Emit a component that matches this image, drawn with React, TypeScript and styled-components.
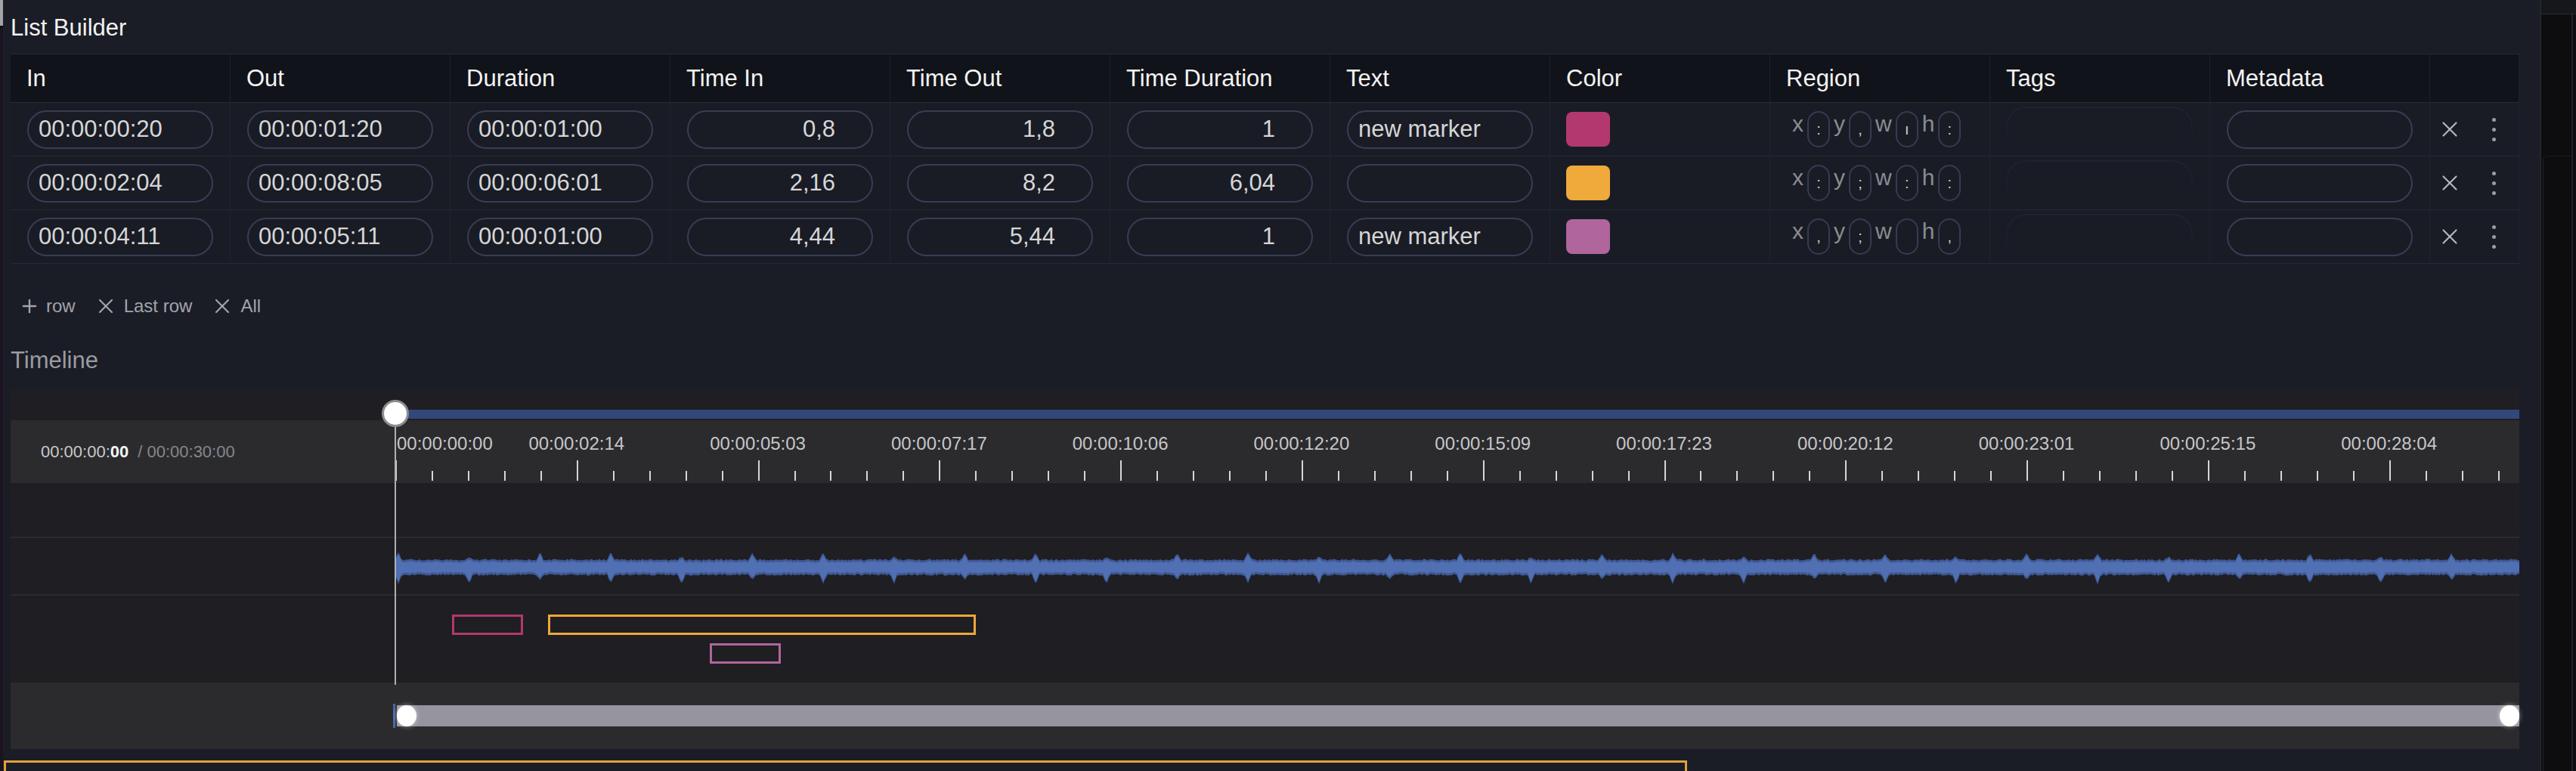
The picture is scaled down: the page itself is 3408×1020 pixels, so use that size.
import React from "react";
import styled, { createGlobalStyle } from "styled-components";
import { Plus, X } from "lucide-react";

const GlobalStyle = createGlobalStyle`
  html, body {
    margin: 0;
    padding: 0;
    background: #1a1d26;
    overflow: hidden;
  }
  body {
    font-family: "Liberation Sans", Arial, sans-serif;
  }
  * { box-sizing: border-box; }
`;

// timeline scale
const LANE_W = 2810;
const DURATION = 30;
const PPS = LANE_W / DURATION;
const FPS = 25;
const MAJOR = 2.56 * PPS;

const pad = (n: number) => String(n).padStart(2, "0");
const tc = (frames: number) =>
  `00:00:${pad(Math.floor(frames / FPS))}:${pad(frames % FPS)}`;

interface MarkerRow {
  tcIn: string;
  tcOut: string;
  tcDur: string;
  timeIn: string;
  timeOut: string;
  timeDur: string;
  text: string;
  color: string;
  region: string[];
}

const rows: MarkerRow[] = [
  { tcIn: "00:00:00:20", tcOut: "00:00:01:20", tcDur: "00:00:01:00", timeIn: "0,8", timeOut: "1,8", timeDur: "1", text: "new marker", color: "#b3386f", region: [":", ",", "ı", ":"] },
  { tcIn: "00:00:02:04", tcOut: "00:00:08:05", tcDur: "00:00:06:01", timeIn: "2,16", timeOut: "8,2", timeDur: "6,04", text: "", color: "#f0a93b", region: [":", ";", ":", ":"] },
  { tcIn: "00:00:04:11", tcOut: "00:00:05:11", tcDur: "00:00:01:00", timeIn: "4,44", timeOut: "5,44", timeDur: "1", text: "new marker", color: "#b0659d", region: [",", ";", "", ","] },
];

const markers = [
  { start: 0.8, dur: 1, color: "#b3386f", lane: 0 },
  { start: 2.16, dur: 6.04, color: "#eda73a", lane: 0 },
  { start: 4.44, dur: 1, color: "#b0659d", lane: 1 },
];

const headers = ["In", "Out", "Duration", "Time In", "Time Out", "Time Duration", "Text", "Color", "Region", "Tags", "Metadata", ""];

const Page = styled.div`
  display: flex;
  width: 3408px;
  height: 1020px;
  overflow: hidden;
  background: #1a1d26;
`;

const LeftEdge = styled.div`
  width: 4px;
  flex: none;
  background: linear-gradient(#a3a3a8 0 34px, #101014 34px 38px, #1b1420 38px);
`;

const Main = styled.main`
  flex: 1;
  min-width: 0;
  padding: 19px 27px 0 10px;
  display: flex;
  flex-direction: column;
  & > * { flex-shrink: 0; }
`;

const SectionTitle = styled.h2<{ $muted?: boolean }>`
  margin: 0;
  font-size: 31px;
  line-height: 36px;
  font-weight: 400;
  color: ${(p) => (p.$muted ? "#9b9ba0" : "#f2f2f2")};
`;

const Table = styled.div`
  margin-top: 16px;
  display: grid;
  grid-template-columns: repeat(11, 291px) 118px;
  border-top: 1px solid #262a35;
  background: #191c25;
`;

const HeadCell = styled.div`
  height: 64px;
  display: flex;
  align-items: center;
  padding-left: 21px;
  background: #11131a;
  border-right: 1px solid #1f222b;
  border-bottom: 1px solid #262a35;
  color: #f4f4f4;
  font-size: 31px;
`;

const Cell = styled.div<{ $pl?: number }>`
  height: 71px;
  display: flex;
  align-items: center;
  padding: 0 22px 0 ${(p) => p.$pl ?? 22}px;
  border-right: 1px solid #20232d;
  border-bottom: 1px solid #262a35;
`;

const Field = styled.input<{ $num?: boolean }>`
  width: 100%;
  height: 51px;
  border: 2px solid #383d55;
  border-radius: 26px;
  background: transparent;
  color: #d6d6d6;
  font-family: "Liberation Sans", Arial, sans-serif;
  font-size: 31px;
  padding: ${(p) => (p.$num ? "0 48px 0 13px" : "0 13px")};
  text-align: ${(p) => (p.$num ? "right" : "left")};
  outline: none;
`;

const Swatch = styled.div<{ $color: string }>`
  width: 58px;
  height: 46px;
  border-radius: 8px;
  background: ${(p) => p.$color};
`;

const RegionGroup = styled.div`
  display: flex;
  align-items: flex-start;
  gap: 5px;
  padding-left: 7px;
  height: 48px;
`;

const RegionLabel = styled.span`
  font-size: 30px;
  line-height: 34px;
  color: #8b8b92;
`;

const RegionPill = styled.span`
  width: 30px;
  height: 48px;
  border: 2px solid #363b52;
  border-radius: 15px;
  display: flex;
  align-items: center;
  justify-content: center;
  color: #cfcfcf;
  font-size: 20px;
  line-height: 1;
`;

const TagBox = styled.div`
  align-self: flex-start;
  margin-top: 5px;
  width: 100%;
  height: 50px;
  border: 2px solid #1f2230;
  border-bottom: none;
  border-radius: 26px 26px 0 0;
  mask-image: linear-gradient(#000 30%, transparent);
`;

const RowClose = styled.button`
  display: flex;
  padding: 0;
  border: none;
  background: none;
  color: #b6b6bb;
`;

const Kebab = styled.span`
  margin-left: 39px;
  display: flex;
  flex-direction: column;
  gap: 8px;
  & > i {
    width: 5px;
    height: 5px;
    border-radius: 50%;
    background: #9c9ca2;
  }
`;

const ButtonBar = styled.div`
  margin-top: 40px;
  padding-left: 11px;
  display: flex;
  gap: 24px;
  height: 32px;
`;

const TextButton = styled.button`
  display: flex;
  align-items: center;
  gap: 8px;
  padding: 0;
  border: none;
  background: none;
  color: #a3a3ab;
  font-family: "Liberation Sans", Arial, sans-serif;
  font-size: 24px;
  line-height: 28px;
`;

const TimelineTitle = styled(SectionTitle)`
  margin-top: 38px;
`;

const Panel = styled.div`
  margin-top: 19px;
  position: relative;
  display: flex;
  flex-direction: column;
`;

const TRow = styled.div<{ $h: number; $light?: boolean; $sep?: boolean }>`
  display: flex;
  height: ${(p) => p.$h}px;
  background: ${(p) => (p.$light ? "#2b2b2e" : "#1f1e22")};
  border-bottom: ${(p) => (p.$sep ? "2px solid #2c2c30" : "none")};
`;

const LabelCell = styled.div`
  width: 509px;
  flex: none;
  display: flex;
  align-items: center;
  padding-left: 40px;
  font-size: 22px;
`;

const Lane = styled.div`
  flex: 1;
  position: relative;
`;

const ScrubLane = styled(Lane)`
  display: flex;
  align-items: flex-end;
  padding-bottom: 2px;
`;

const ScrubBar = styled.div`
  width: 100%;
  height: 12px;
  background: #33487a;
`;

const Current = styled.span`
  color: #c9c9c9;
  & > b {
    color: #f4f4f4;
    font-weight: 700;
  }
`;

const Total = styled.span`
  margin-left: 12px;
  color: #86868b;
`;

const TickLabel = styled.span<{ $first?: boolean }>`
  position: absolute;
  top: 17px;
  font-size: 24px;
  line-height: 28px;
  color: #c6c6c8;
  white-space: nowrap;
  transform: ${(p) => (p.$first ? "none" : "translateX(-50%)")};
`;

const Block = styled.div<{ $color: string }>`
  position: absolute;
  height: 27px;
  border: 3px solid ${(p) => p.$color};
`;

const ScrollLane = styled(Lane)`
  display: flex;
  align-items: center;
`;

const ScrollTrack = styled.div`
  position: relative;
  flex: 1;
  margin-left: 2px;
  height: 28px;
  background: #96949f;
`;

const ScrollEdge = styled.span`
  position: absolute;
  left: -5px;
  top: -2px;
  width: 3px;
  height: 32px;
  background: #4a66a8;
`;

const ScrollKnob = styled.span<{ $side: "left" | "right" }>`
  position: absolute;
  top: 0;
  ${(p) => p.$side}: 0;
  width: 26px;
  height: 28px;
  border-radius: 50%;
  background: #ffffff;
  box-shadow: 0 0 6px rgba(255, 255, 255, 0.55);
`;

const PlayheadLine = styled.div`
  position: absolute;
  left: 508px;
  top: 33px;
  width: 2px;
  height: 359px;
  background: #b0b0b3;
`;

const PlayheadKnob = styled.div`
  position: absolute;
  left: 491px;
  top: 15px;
  width: 36px;
  height: 36px;
  border-radius: 50%;
  background: #ffffff;
  border: 3px solid #8c8c90;
`;

const OrangeBox = styled.div`
  margin-top: 15px;
  margin-left: -9px;
  width: 2227px;
  height: 200px;
  border: 3px solid #e2a13a;
`;

const SidePanel = styled.aside`
  width: 48px;
  flex: none;
  display: flex;
  flex-direction: column;
  background: linear-gradient(90deg, #0d0d0f 0 40px, #2a1a30 40px 42px, #0d0d0f 42px);
  border-left: 2px solid #25262b;
`;

const SideTop = styled.div`
  height: 19px;
  background: #16171b;
  border-bottom: 1px solid #2a2b31;
`;

const SideInner = styled.div`
  margin: 187px 6px 0 2px;
  flex: 1;
  border-left: 1px solid #202126;
  border-top: 1px solid #1c1d22;
  border-top-left-radius: 6px;
`;

function seeded(seed: number) {
  let s = seed;
  return () => {
    s = (s * 9301 + 49297) % 233280;
    return s / 233280;
  };
}

function wavePath(inset: number) {
  const r = seeded(11);
  const spikes: number[] = [];
  for (let x = 4; x < LANE_W; x += PPS) spikes.push(x);
  const top: string[] = [];
  const bot: string[] = [];
  for (let x = 0; x <= LANE_W; x += 2) {
    let t = 28.5 + (r() - 0.5) * 2.4 + inset;
    let b = 48.5 + (r() - 0.5) * 2.4 - inset;
    spikes.forEach((sx, k) => {
      const d = Math.abs(x - sx);
      if (d < 5) {
        const a = 1 - d / 5;
        t -= 9 * a * (k % 3 === 1 ? 0.45 : 1);
        b += 12 * a * (k % 3 === 2 ? 0.55 : 1);
      }
    });
    top.push(`${x},${t.toFixed(1)}`);
    bot.push(`${x},${b.toFixed(1)}`);
  }
  return `M${top.join(" L")} L${bot.reverse().join(" L")} Z`;
}

const outerWave = wavePath(0);
const innerWave = wavePath(3);

function Ruler() {
  const ticks: number[] = [];
  for (let i = 0; i * (MAJOR / 5) < LANE_W; i++) ticks.push(i);
  const majors = ticks.filter((i) => i % 5 === 0);
  return (
    <>
      {majors.map((i) => {
        const k = i / 5;
        return (
          <TickLabel key={k} $first={k === 0} style={{ left: k === 0 ? 2 : k * MAJOR }}>
            {tc(k * 64)}
          </TickLabel>
        );
      })}
      <svg width={LANE_W} height={83} style={{ display: "block" }}>
        {ticks.map((i) => {
          const x = Math.round(i * (MAJOR / 5)) + 1;
          return (
            <line
              key={i}
              x1={x}
              x2={x}
              y1={i % 5 === 0 ? 53 : 67}
              y2={80}
              stroke="#d6d6d8"
              strokeWidth={2}
            />
          );
        })}
      </svg>
    </>
  );
}

export default function App() {
  return (
    <Page>
      <GlobalStyle />
      <LeftEdge />
      <Main>
        <SectionTitle>List Builder</SectionTitle>

        <Table>
          {headers.map((h, i) => (
            <HeadCell key={i}>{h}</HeadCell>
          ))}
          {rows.map((row, r) => (
            <React.Fragment key={r}>
              <Cell><Field readOnly value={row.tcIn} /></Cell>
              <Cell><Field readOnly value={row.tcOut} /></Cell>
              <Cell><Field readOnly value={row.tcDur} /></Cell>
              <Cell><Field $num readOnly value={row.timeIn} /></Cell>
              <Cell><Field $num readOnly value={row.timeOut} /></Cell>
              <Cell><Field $num readOnly value={row.timeDur} /></Cell>
              <Cell><Field readOnly value={row.text} /></Cell>
              <Cell $pl={21}><Swatch $color={row.color} /></Cell>
              <Cell>
                <RegionGroup>
                  {["x", "y", "w", "h"].map((axis, a) => (
                    <React.Fragment key={axis}>
                      <RegionLabel>{axis}</RegionLabel>
                      <RegionPill>{row.region[a]}</RegionPill>
                    </React.Fragment>
                  ))}
                </RegionGroup>
              </Cell>
              <Cell $pl={21}><TagBox /></Cell>
              <Cell><Field readOnly value="" /></Cell>
              <Cell $pl={9}>
                <RowClose><X size={34} strokeWidth={1.5} /></RowClose>
                <Kebab><i /><i /><i /></Kebab>
              </Cell>
            </React.Fragment>
          ))}
        </Table>

        <ButtonBar>
          <TextButton><Plus size={28} strokeWidth={2} />row</TextButton>
          <TextButton><X size={32} strokeWidth={1.6} />Last row</TextButton>
          <TextButton><X size={32} strokeWidth={1.6} />All</TextButton>
        </ButtonBar>

        <TimelineTitle $muted>Timeline</TimelineTitle>

        <Panel>
          <TRow $h={42}>
            <LabelCell />
            <ScrubLane><ScrubBar /></ScrubLane>
          </TRow>
          <TRow $h={83} $light>
            <LabelCell>
              <Current>00:00:00:<b>00</b></Current>
              <Total>/ 00:00:30:00</Total>
            </LabelCell>
            <Lane><Ruler /></Lane>
          </TRow>
          <TRow $h={73} $sep>
            <LabelCell />
            <Lane />
          </TRow>
          <TRow $h={76} $sep>
            <LabelCell />
            <Lane>
              <svg width={LANE_W} height={74} style={{ display: "block" }}>
                <path d={outerWave} fill="#3f5894" />
                <path d={innerWave} fill="#5070b3" />
              </svg>
            </Lane>
          </TRow>
          <TRow $h={115}>
            <LabelCell />
            <Lane>
              {markers.map((m, i) => (
                <Block
                  key={i}
                  $color={m.color}
                  style={{ left: m.start * PPS, width: m.dur * PPS, top: m.lane === 0 ? 25 : 63 }}
                />
              ))}
            </Lane>
          </TRow>
          <TRow $h={88} $light>
            <LabelCell />
            <ScrollLane>
              <ScrollTrack>
                <ScrollEdge />
                <ScrollKnob $side="left" />
                <ScrollKnob $side="right" />
              </ScrollTrack>
            </ScrollLane>
          </TRow>
          <PlayheadLine />
          <PlayheadKnob />
        </Panel>

        <OrangeBox />
      </Main>
      <SidePanel>
        <SideTop />
        <SideInner />
      </SidePanel>
    </Page>
  );
}
